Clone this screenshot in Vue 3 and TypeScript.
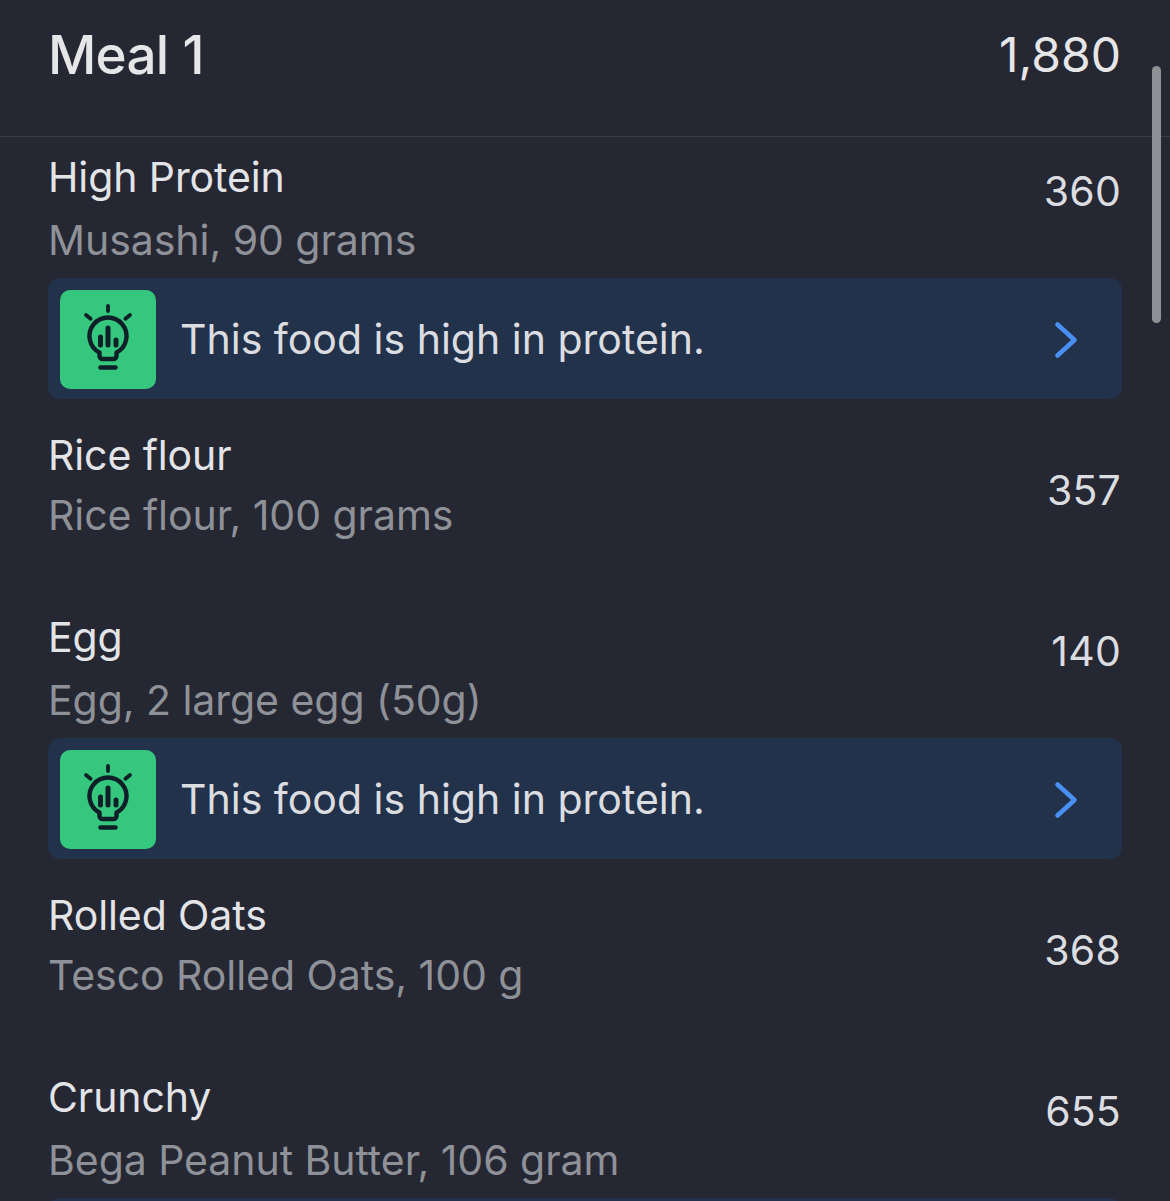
<script setup lang="ts">
interface Food {
  name: string
  detail: string
  kcal: number
  tip?: boolean
  cutOff?: boolean
}

const foods: Food[] = [
  { name: 'High Protein', detail: 'Musashi, 90 grams', kcal: 360, tip: true },
  { name: 'Rice flour', detail: 'Rice flour, 100 grams', kcal: 357 },
  { name: 'Egg', detail: 'Egg, 2 large egg (50g)', kcal: 140, tip: true },
  { name: 'Rolled Oats', detail: 'Tesco Rolled Oats, 100 g', kcal: 368 },
  { name: 'Crunchy', detail: 'Bega Peanut Butter, 106 gram', kcal: 655, tip: true, cutOff: true }
]
</script>

<template>
  <div class="screen">
    <header class="meal-head">
      <h1>Meal 1</h1>
      <span class="total">1,880</span>
    </header>

    <template v-for="food in foods" :key="food.name">
      <div class="food" :class="{ tipped: food.tip }">
        <div class="info">
          <div class="name">{{ food.name }}</div>
          <div class="detail">{{ food.detail }}</div>
        </div>
        <span class="kcal">{{ food.kcal }}</span>
      </div>
      <div v-if="food.tip" class="tip">
        <template v-if="!food.cutOff">
          <div class="tile">
            <svg width="96" height="99" viewBox="0 0 96 99" fill="none" stroke="#0e1f27" stroke-width="4.4" stroke-linecap="round" stroke-linejoin="round">
              <path d="M48 16v5M26 25l4.6 3.8M70 25l-4.6 3.8" stroke-width="3.8" />
              <path d="M39.5 62.5a18.5 18.5 0 1 1 17 0V66a3 3 0 0 1-3 3H42.5a3 3 0 0 1-3-3z" />
              <path d="M48 38v17M40.5 47v8M56 50v5" stroke-width="5" />
              <path d="M40.5 77.5h15" />
            </svg>
          </div>
          <span class="tip-text">This food is high in protein.</span>
          <svg class="chevron" width="24" height="38" viewBox="0 0 24 38" fill="none">
            <path d="M3.5 3.5 20.5 19 3.5 34.5" stroke="#4a90f2" stroke-width="4.6" stroke-linecap="round" stroke-linejoin="round" />
          </svg>
        </template>
      </div>
    </template>

    <div class="scrollbar"></div>
  </div>
</template>

<style>
html,
body {
  margin: 0;
  background: #252732;
}
</style>

<style scoped>
.screen {
  position: relative;
  width: 1170px;
  height: 1201px;
  overflow: hidden;
  background: #252732;
  font-family: Inter, "Liberation Sans", sans-serif;
}

.meal-head {
  display: flex;
  justify-content: space-between;
  align-items: flex-start;
  height: 137px;
  padding: 25px 49px 0 48px;
  box-sizing: border-box;
  border-bottom: 1px solid #3b3d47;
}

.meal-head h1 {
  margin: 0;
  font-size: 53px;
  line-height: 60px;
  font-weight: 500;
  letter-spacing: -0.8px;
  word-spacing: 1px;
  color: #e6e6e8;
}

.total {
  font-size: 48px;
  line-height: 60px;
  font-weight: 400;
  color: #e6e6e8;
}

.food {
  display: flex;
  justify-content: space-between;
  align-items: flex-start;
  height: 198px;
  padding: 26px 49px 0 48px;
  box-sizing: border-box;
}

.food.tipped {
  height: 141px;
  padding-top: 10px;
}

.name {
  font-size: 41px;
  line-height: 60px;
  letter-spacing: -0.1px;
  color: #e3e4e7;
}

.detail {
  font-size: 41px;
  line-height: 60px;
  letter-spacing: -0.05px;
  color: #8f9198;
}

.tipped .detail {
  margin-top: 3px;
}

.kcal {
  margin-top: 41px;
  font-size: 41px;
  line-height: 48px;
  letter-spacing: 0.2px;
  color: #dcdde0;
}

.tipped .kcal {
  margin-top: 20px;
}

.tip {
  display: flex;
  align-items: center;
  height: 121px;
  margin: 0 48px;
  padding: 2px 0 0 12px;
  box-sizing: border-box;
  border-radius: 12px;
  background: #22324b;
}

.tile {
  display: flex;
  flex-shrink: 0;
  width: 96px;
  height: 99px;
  border-radius: 10px;
  background: #35c77d;
}

.tip-text {
  flex: 1;
  margin-left: 24px;
  margin-bottom: 2px;
  font-size: 41px;
  color: #dcdde0;
}

.chevron {
  margin-right: 44px;
}

.scrollbar {
  position: absolute;
  top: 66px;
  left: 1152px;
  width: 9px;
  height: 257px;
  border-radius: 5px;
  background: #8f9197;
}
</style>
